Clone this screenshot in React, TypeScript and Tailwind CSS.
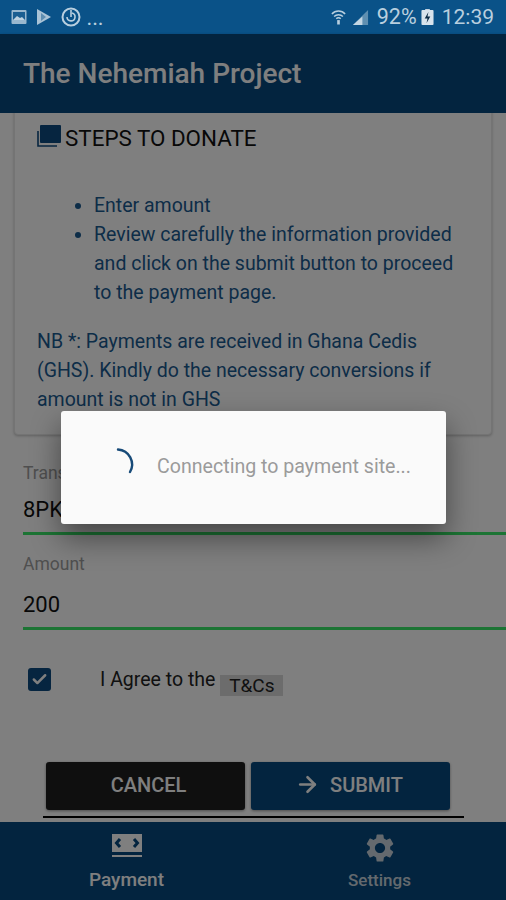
import { ArrowRight, Check } from 'lucide-react'
import { MdSettings } from 'react-icons/md'

function StatusIcons() {
  return (
    <div className="flex items-center gap-[9px] text-[#b9cfdf]">
      <svg width="16" height="16" viewBox="0 0 16 16" className="opacity-90">
        <rect x="0.5" y="1" width="15" height="14" rx="1" fill="#a9c3d6" />
        <rect x="2" y="3" width="12" height="8" fill="#1d6093" />
        <path d="M2 11l4-4 3 2 2-1 3 3z" fill="#d3e0ea" />
      </svg>
      <svg width="16" height="18" viewBox="0 0 16 18">
        <path d="M1 1l14 8-14 8z" fill="#a9c3d6" />
        <path d="M5 5l5 4-5 4z" fill="#5d8db0" />
      </svg>
      <svg width="20" height="20" viewBox="0 0 20 20" fill="none" stroke="#b9cfdf" strokeWidth="2">
        <circle cx="10" cy="10" r="8.5" />
        <path d="M6 10a4 4 0 1 0 5-4M10 3v7" strokeWidth="1.6" />
      </svg>
    </div>
  )
}

export default function App() {
  return (
    <div className="relative flex h-[900px] w-[506px] flex-col overflow-hidden bg-white font-['Roboto',sans-serif]">
      <div className="flex h-[34px] shrink-0 items-center justify-between bg-[#0a5288] pl-[11px] pr-[12px] text-[#b9cfdf]">
        <div className="flex items-center">
          <StatusIcons />
          <span className="ml-[6px] mt-[6px] text-[16px] font-bold leading-none tracking-[1px]">...</span>
        </div>
        <div className="flex items-center">
          <svg width="15" height="18" viewBox="0 0 17 19" fill="none" stroke="#b9cfdf" strokeWidth="1.7">
            <path d="M1 6a10 10 0 0 1 15 0M3.5 9a7 7 0 0 1 10 0M6 11.5a3.5 3.5 0 0 1 5 0" />
            <path d="M8.5 13v5" strokeWidth="3" />
          </svg>
          <svg width="17" height="17" viewBox="0 0 18 18" className="ml-[6px]">
            <path d="M17 1v16H1z" fill="#5f8fb1" />
            <path d="M11 8v9H1z" fill="#c4d6e3" />
          </svg>
          <span className="ml-[8px] text-[21.5px] leading-none">92%</span>
          <svg width="13" height="16" viewBox="0 0 14 17" className="ml-[4px]">
            <rect x="0.5" y="1" width="13" height="16" rx="1" fill="#d8e3ec" />
            <rect x="4.5" y="0" width="5" height="2" fill="#d8e3ec" />
            <path d="M8 3L4 10h3l-1 5 4-7H7z" fill="#0b2a44" />
          </svg>
          <span className="ml-[8px] text-[21px] leading-none">12:39</span>
        </div>
      </div>

      <header className="flex h-[79px] shrink-0 items-center bg-[#06487e] pl-[23px] shadow-[0_1px_3px_rgba(0,0,0,0.3)]">
        <h1 className="text-[28px] font-medium leading-none text-white">The Nehemiah Project</h1>
      </header>

      <main className="flex min-h-0 flex-1 flex-col overflow-hidden bg-white">
        <section className="mx-[14px] -mt-[10px] h-[332px] shrink-0 rounded-[4px] border border-[#e8e8e8] bg-white pl-[22px] pr-[20px] pt-[20px] shadow-[0_1px_3px_rgba(0,0,0,0.25)]">
          <div className="flex items-center gap-[4px] text-[22.4px] leading-[28px] text-[#111]">
            <svg width="24" height="24" viewBox="0 0 24 24" className="shrink-0 -translate-y-[2px]">
              <rect x="3" y="1" width="21" height="18" rx="1" fill="#0d4a80" />
              <path d="M1 7v15h19" fill="none" stroke="#0d4a80" strokeWidth="1.6" />
            </svg>
            <span>STEPS TO DONATE</span>
          </div>
          <ul className="ml-[57px] mt-[39px] list-disc text-[19.5px] leading-[29px] text-[#1a5a90]">
            <li>Enter amount</li>
            <li>Review carefully the information provided and click on the submit button to proceed to the payment page.</li>
          </ul>
          <p className="mt-[20px] text-[19.5px] leading-[29px] text-[#1a5a90]">
            NB *: Payments are received in Ghana Cedis (GHS). Kindly do the necessary conversions if amount is not in GHS
          </p>
        </section>

        <div className="ml-[23px] mt-[29px]">
          <div className="text-[17.5px] leading-[18px] text-[#9e9e9e]">Transaction ID</div>
          <div className="mt-[15px] border-b-[3px] border-[#38e868] pb-[9px] text-[22px] leading-[26px] text-[#111]">8PK2WQ7</div>
        </div>
        <div className="ml-[23px] mt-[20px]">
          <div className="text-[17.5px] leading-[18px] text-[#9e9e9e]">Amount</div>
          <div className="mt-[19px] border-b-[3px] border-[#38e868] pb-[9px] text-[22px] leading-[26px] text-[#111]">200</div>
        </div>

        <div className="ml-[28px] mt-[38px] flex items-start">
          <span className="flex h-[23px] w-[23px] items-center justify-center rounded-[3px] bg-[#0d4a80]">
            <Check size={17} strokeWidth={3.5} className="text-white" />
          </span>
          <span className="ml-[49px] pt-[1px] text-[19.5px] leading-[22px] text-[#222]">I Agree to the</span>
          <span className="ml-[5px] mt-[7px] flex h-[21px] w-[63px] items-center justify-center bg-[#d8d8d8] text-[19px] leading-none text-[#222]">T&amp;Cs</span>
        </div>

        <div className="ml-[46px] mt-[66px] flex gap-[6px]">
          <button className="h-[48px] w-[199px] rounded-[3px] bg-[#1f1f1f] pb-[3px] pl-[6px] text-[20px] font-medium text-white shadow-[0_1px_3px_rgba(0,0,0,0.4)]">
            CANCEL
          </button>
          <button className="flex h-[48px] w-[199px] items-center justify-center gap-[10px] rounded-[3px] bg-[#06487e] pb-[3px] pr-[3px] text-[20px] font-medium text-white shadow-[0_1px_3px_rgba(0,0,0,0.4)]">
            <ArrowRight size={25} strokeWidth={2.5} />
            SUBMIT
          </button>
        </div>
        <div className="ml-[43px] mt-[6px] h-[2px] w-[421px] bg-black" />
      </main>

      <nav className="flex h-[78px] shrink-0 bg-[#06487e]">
        <div className="flex flex-1 flex-col items-center pt-[12px] text-white">
          <svg width="30" height="24" viewBox="0 0 30 24">
            <rect x="0" y="0" width="30" height="18" fill="#fff" />
            <path d="M8 5L4.5 9 8 13M22 5l3.500 4L22 13" fill="none" stroke="#06487e" strokeWidth="3" />
            <rect x="0" y="21" width="30" height="2" fill="#fff" />
          </svg>
          <span className="mt-[10px] text-[19px] font-medium leading-[24px]">Payment</span>
        </div>
        <div className="flex flex-1 flex-col items-center pt-[9px] text-[#c8d3dc]">
          <MdSettings size={34} />
          <span className="mt-[4px] text-[17px] font-medium leading-[22px]">Settings</span>
        </div>
      </nav>

      <div className="absolute inset-x-0 bottom-0 top-[34px] bg-black/50" />

      <div className="absolute left-[61px] top-[411px] flex h-[113px] w-[385px] items-center rounded-[3px] bg-[#fafafa] pb-[1px] pl-[48px] shadow-[0_14px_30px_rgba(0,0,0,0.45)]">
        <svg width="32" height="32" viewBox="0 0 32 32" fill="none" className="shrink-0 -translate-y-[4px]">
          <path d="M9 2.500A15 15 0 0 1 21 25" stroke="#174a78" strokeWidth="2.400" strokeLinecap="round" />
        </svg>
        <span className="ml-[16px] text-[19.6px] leading-none text-[#9b9b9b]">Connecting to payment site...</span>
      </div>
    </div>
  )
}
